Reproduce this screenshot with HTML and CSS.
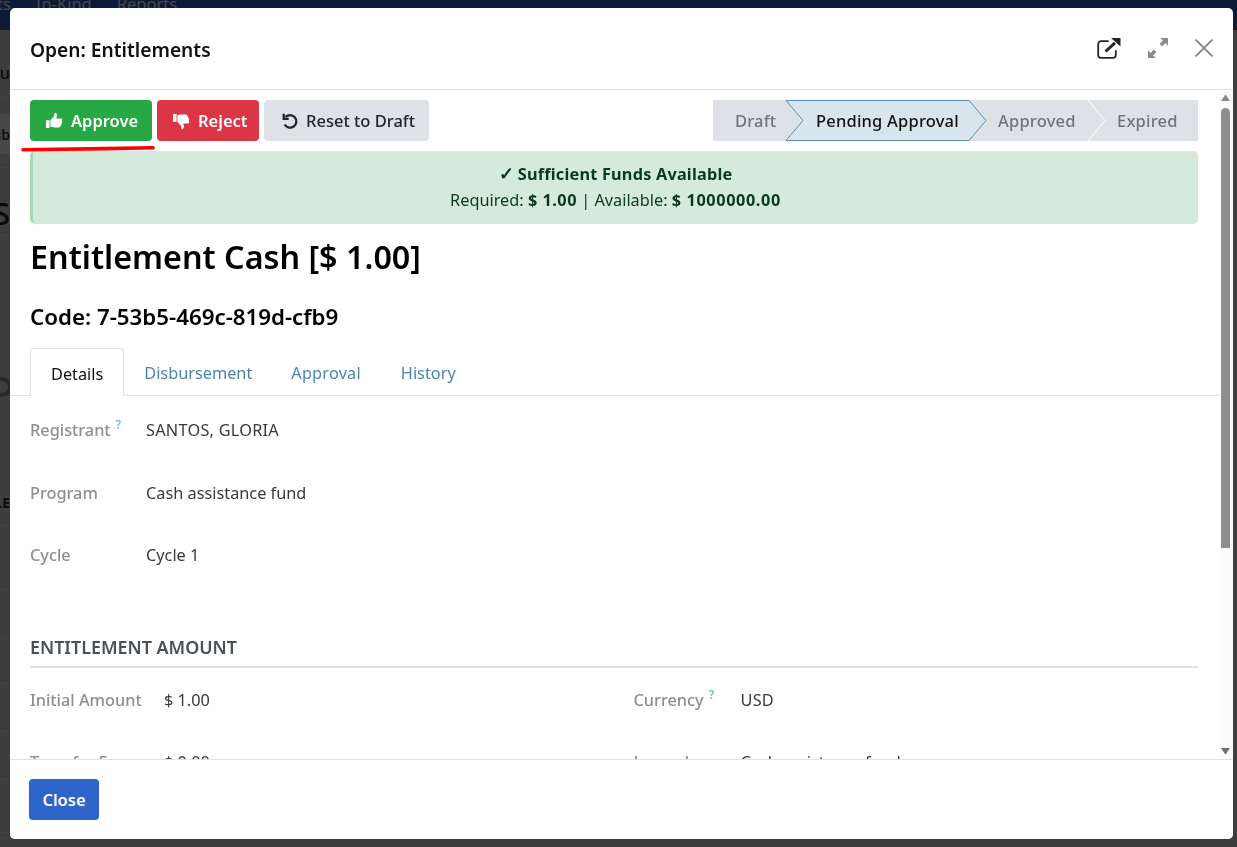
FILE: index.html
```html
<!DOCTYPE html>
<html lang="en">
<head>
<meta charset="utf-8">
<title>Open: Entitlements</title>
<link rel="stylesheet" href="styles.css">
</head>
<body>
<div class="app">
  <nav class="navbar"><span class="nav-item">Grants</span><span class="nav-item">In-Kind</span><span class="nav-item">Reports</span></nav>
  <div class="behind">
    <div class="bg-row a">Cou</div>
    <div class="bg-row b"><span class="band">Distrib</span></div>
    <div class="bg-row c">S</div>
    <div class="bg-row d"><span class="bg-circle"></span></div>
    <div class="bg-row e">TABLE</div>
    <div class="bg-row f"></div>
    <div class="bg-row g"></div>
    <div class="bg-row g"></div>
    <div class="bg-row h"></div>
    <div class="bg-row h"></div>
    <div class="bg-row i"></div>
  </div>
</div>
<div class="backdrop"></div>
<section class="modal">
  <header class="modal-header">
    <h4 class="modal-title">Open: Entitlements</h4>
    <div class="modal-tools">
      <svg class="tool-icon" viewBox="0 0 24 21" width="24" height="21" fill="none" stroke="#212529" stroke-width="1.800" stroke-linecap="round" stroke-linejoin="round"><path d="M11 3.200H4a2.800 2.800 0 0 0-2.800 2.800v11A2.800 2.800 0 0 0 4 19.800h12a2.800 2.800 0 0 0 2.800-2.800v-4"/><path d="M8.500 13.500 18 4.800" stroke-width="3" stroke-linecap="butt"/><path d="M14 0h9.500v8.500z" fill="#212529" stroke="none"/></svg>
      <svg class="tool-icon" viewBox="0 0 20 20" width="20" height="20" fill="#8c8c8c"><path d="M12.300 0H20v7.700l-2.600-2.600-3.300 3.300-2.500-2.500 3.300-3.300z"/><path d="M7.700 20H0v-7.700l2.600 2.600 3.300-3.300 2.500 2.500-3.300 3.300z"/></svg>
      <svg class="tool-icon" viewBox="0 0 18 18" width="18" height="18" fill="none" stroke="#808080" stroke-width="1.700"><path d="M.6.6l16.800 16.800M17.400.6.6 17.400"/></svg>
    </div>
  </header>
  <div class="modal-body">
    <div class="scroll-content">
      <div class="form-top">
        <div class="statusbar">
          <div class="actions">
            <button class="btn btn-success"><svg viewBox="0 0 18 18" width="18" height="18" fill="#fff"><path d="M1 8.200h3.600v7.800H1z"/><path d="M5.400 8.200 8.700 4.600c.6-.8.600-1.800.8-3 .1-.7 1.300-.9 1.900-.1.900 1.100.6 3-.2 5h4.700c1.600 0 1.900 1.900.8 2.500.7.700.6 1.900-.3 2.400.4.900 0 1.900-.9 2.200.2 1.100-.5 1.900-1.700 1.900H9.500c-1.600 0-2.700-.5-4.100-.9z"/></svg>Approve</button>
            <button class="btn btn-danger"><svg viewBox="0 0 18 18" width="18" height="18" fill="#fff"><path d="M1 9.800h3.600V2H1z"/><path d="M5.400 9.800 8.700 13.400c.6.800.6 1.800.8 3 .1.700 1.300.9 1.900.1.900-1.100.6-3-.2-5h4.700c1.600 0 1.900-1.900.8-2.500.7-.7.6-1.900-.3-2.400.4-.9 0-1.900-.9-2.200.2-1.100-.5-1.900-1.700-1.900H9.500c-1.600 0-2.700.5-4.100.9z"/></svg>Reject</button>
            <button class="btn btn-secondary"><svg viewBox="0 0 18 18" width="18" height="18" fill="none" stroke="#212529" stroke-width="2.300"><path d="M4.500 5A6.300 6.300 0 1 1 3.600 12.500"/><path d="M2.700 1.800v5h5" stroke-linejoin="miter"/></svg>Reset to Draft</button>
          </div>
          <div class="pipeline">
            <svg class="pipeline-shape" viewBox="0 0 485 41" width="485" height="41"><path d="M73 .5h183l17 20-17 20H73l17-20z" fill="#d9e5ed" stroke="#5c8eb0"/><path d="M375 0l17 20.500L375 41" fill="none" stroke="#fff"/></svg>
            <span class="stage draft">Draft</span>
            <span class="stage current">Pending Approval</span>
            <span class="stage approved">Approved</span>
            <span class="stage expired">Expired</span>
          </div>
        </div>
        <div class="alert">
          <div class="alert-head"><span class="check">✓</span> <strong>Sufficient Funds Available</strong></div>
          <div>Required: <strong class="amt-short">$ 1.00</strong> | Available: <strong class="amt-long">$ 1000000.00</strong></div>
        </div>
        <h1 class="record-title">Entitlement Cash [$ 1.00]</h1>
        <h2 class="record-code">Code: 7-53b5-469c-819d-cfb9</h2>
      </div>
      <div class="tabs">
        <span class="tab active">Details</span>
        <span class="tab">Disbursement</span>
        <span class="tab approval-tab">Approval</span>
        <span class="tab">History</span>
      </div>
      <div class="sheet">
        <dl class="main-fields">
          <div class="field"><dt>Registrant<sup>?</sup></dt><dd class="caps">SANTOS, GLORIA</dd></div>
          <div class="field"><dt>Program</dt><dd>Cash assistance fund</dd></div>
          <div class="field"><dt>Cycle</dt><dd>Cycle 1</dd></div>
        </dl>
        <h3 class="section-title">ENTITLEMENT AMOUNT</h3>
        <dl class="amount-grid">
          <div class="field small"><dt>Initial Amount</dt><dd>$ 1.00</dd></div>
          <div class="field small right"><dt>Currency<sup>?</sup></dt><dd class="caps">USD</dd></div>
          <div class="field small"><dt>Transfer Fee</dt><dd>$ 0.00</dd></div>
          <div class="field small right"><dt>Journal</dt><dd>Cash assistance fund</dd></div>
        </dl>
      </div>
    </div>
    <div class="scrollbar">
      <span class="arrow up"></span>
      <span class="thumb-area"><span class="thumb"></span></span>
      <span class="arrow down"></span>
    </div>
  </div>
  <footer class="modal-footer"><button class="btn btn-primary">Close</button></footer>
</section>
<svg class="annotation" width="140" height="14" viewBox="0 0 140 14" fill="none"><path d="M3 9.800C40 9.600 90 8.600 133 7.800" stroke="#f00" stroke-width="3.600" stroke-linecap="round"/></svg>
</body>
</html>
```
FILE: styles.css
```css
* { box-sizing: border-box; }
html, body { margin: 0; height: 100%; overflow: hidden; }
body { font-family: "Noto Sans", sans-serif; font-size: 16.3px; color: #212529; background: #ddd; }

.app { height: 847px; overflow: hidden; }
.navbar { height: 30px; background: #2a5ec0; color: #fff; display: flex; gap: 25px; font-size: 16.500px; line-height: 8px; overflow: hidden; }
.nav-item { white-space: nowrap; }
.nav-item:first-child { margin-left: -41px; }

.behind { display: flex; flex-direction: column; width: 10px; overflow: hidden; }
.bg-row { display: flex; justify-content: flex-end; flex: none; white-space: nowrap; border-bottom: 1px solid #c4c4c4; font-weight: 500; }
.a { height: 73px; line-height: 86px; }
.b { height: 62px; padding-top: 11px; }
.band { display: block; height: 40px; line-height: 42px; width: 10px; flex: none; background: #fff; font-size: 14px; text-align: right; direction: rtl; }
.c { height: 68px; font-size: 30px; line-height: 98px; }
.d { height: 162px; padding-top: 144px; }
.bg-circle { display: block; flex: none; width: 20px; height: 20px; margin-right: -2px; border: 4px solid #8b929a; border-radius: 50%; }
.e { height: 128px; font-size: 14px; line-height: 216px; font-weight: 700; }
.f { height: 64px; }
.g { height: 47px; }
.h { height: 48px; }
.i { height: 59px; }

.backdrop { position: fixed; inset: 0; background: rgba(0, 0, 0, .72); }

.modal { position: fixed; left: 10px; top: 8px; width: 1223px; height: 831px; background: #fff; border-radius: 5px; display: flex; flex-direction: column; overflow: hidden; }
.modal-header { flex: 0 0 82px; border-bottom: 1px solid #dee2e6; display: flex; align-items: center; justify-content: space-between; padding: 0 20px 0 20px; }
.modal-title { margin: 2px 0 0; font-size: 19.200px; font-weight: 600; color: #111; line-height: 28px; }
.modal-tools { display: flex; align-items: center; gap: 27px; margin-top: -1px; }
.tool-icon { display: block; }

.modal-body { flex: 1 1 0; min-height: 0; display: flex; overflow: hidden; }
.scroll-content { flex: 1 1 0; min-width: 0; overflow: hidden; }
.scrollbar { flex: 0 0 13px; background: #fbfbfb; display: flex; flex-direction: column; align-items: flex-start; padding-left: 1px; }
.thumb-area { flex: 1; width: 9px; }
.thumb { display: block; width: 9px; height: 440px; background: #8e8e8e; border-radius: 5px 5px 0 0; }
.arrow { flex: none; width: 9px; height: 6px; }
.arrow.up { margin: 5px 0 7px; border-left: 4.500px solid transparent; border-right: 4.500px solid transparent; border-bottom: 6px solid #8a8a8a; }
.arrow.down { margin: 6px 0 5px; border-left: 4.500px solid transparent; border-right: 4.500px solid transparent; border-top: 6px solid #6f6f6f; }

.modal-footer { flex: 0 0 80px; border-top: 1px solid #dee2e6; padding: 19px 0 0 19px; background: #fff; }

.form-top { padding: 10px 22px 0 20px; }
.statusbar { display: flex; justify-content: space-between; height: 41px; }
.actions { display: flex; gap: 5px; }
.btn { height: 41px; border: 0; border-radius: 4px; font-family: inherit; font-size: 16.500px; font-weight: 600; display: inline-flex; align-items: center; gap: 8px; padding: 0 0 0 15px; white-space: nowrap; }
.btn svg { flex: none; }
.btn-success { background: #28a745; color: #fff; width: 122px; }
.btn-danger { background: #dc3545; color: #fff; width: 102px; }
.btn-secondary { background: #dee2e6; color: #212529; width: 165px; font-size: 16.500px; font-weight: 500; padding-left: 17px; gap: 7px; }
.btn-primary { background: #2f64cb; color: #fff; width: 70px; justify-content: center; padding: 0; }

.pipeline { position: relative; display: flex; width: 485px; height: 41px; background: #dee2e6; }
.pipeline-shape { position: absolute; left: 0; top: 0; }
.stage { position: relative; display: flex; align-items: center; flex: none; height: 41px; padding-bottom: 1px; color: #6c757d; font-size: 16.500px; font-weight: 500; letter-spacing: .2px; white-space: nowrap; }
.draft { width: 73px; padding-left: 22px; }
.current { width: 183px; padding-left: 30px; color: #111; }
.approved { width: 119px; padding-left: 29px; }
.expired { width: 110px; padding-left: 29px; }

.alert { height: 73px; margin-top: 10px; background: #d4ebdb; border-left: 3px solid #a9d8b6; border-radius: 5px; color: #0a3a1a; text-align: center; line-height: 26px; padding-top: 9px; }
.alert strong { font-weight: 700; letter-spacing: .2px; }
.alert strong.amt-short { letter-spacing: .5px; }
.alert strong.amt-long { letter-spacing: .6px; }
.check { font-size: 18px; font-weight: 700; }
.record-title { margin: 11px 0 0; font-size: 32.300px; font-weight: 600; line-height: 42px; color: #000; }
.record-code { margin: 27px 0 0; font-size: 22.300px; font-weight: 600; line-height: 26px; color: #000; }

.tabs { display: flex; margin-top: 18px; height: 48px; padding-left: 20px; border-bottom: 1px solid #dee2e6; }
.tab { display: flex; align-items: center; height: 48px; padding: 2px 20px 0; color: #4d84ad; }
.tab.active { color: #111; background: #fff; border: 1px solid #dee2e6; border-bottom: 0; border-radius: 4px 4px 0 0; }
.approval-tab { letter-spacing: .2px; margin-left: -1px; }

.sheet { padding: 0 22px 0 20px; }
.main-fields { margin: 0; padding-top: 16px; }
.amount-grid { margin: 0; display: grid; grid-template-columns: 603.500px 1fr; padding-top: 14px; }
.field { display: flex; margin: 0; line-height: 36px; height: 62.500px; }
.field dt { width: 116px; font-weight: 500; color: #8a9096; white-space: nowrap; }
.field dd { margin: 0; color: #343a40; white-space: nowrap; }
.field dd.caps { letter-spacing: .25px; }
.field sup { color: #5cc3d9; font-size: 12px; font-weight: 600; margin-left: 5px; position: relative; top: -7px; line-height: 0; vertical-align: baseline; }
.section-title { margin: 35px 0 0; height: 33px; font-size: 17.900px; font-weight: 600; line-height: 24px; color: #495057; border-bottom: 2px solid #dee2e6; }
.field.small dt { width: 134px; }
.field.small.right dt { width: 107px; }

.annotation { position: fixed; left: 20px; top: 140px; }
```
